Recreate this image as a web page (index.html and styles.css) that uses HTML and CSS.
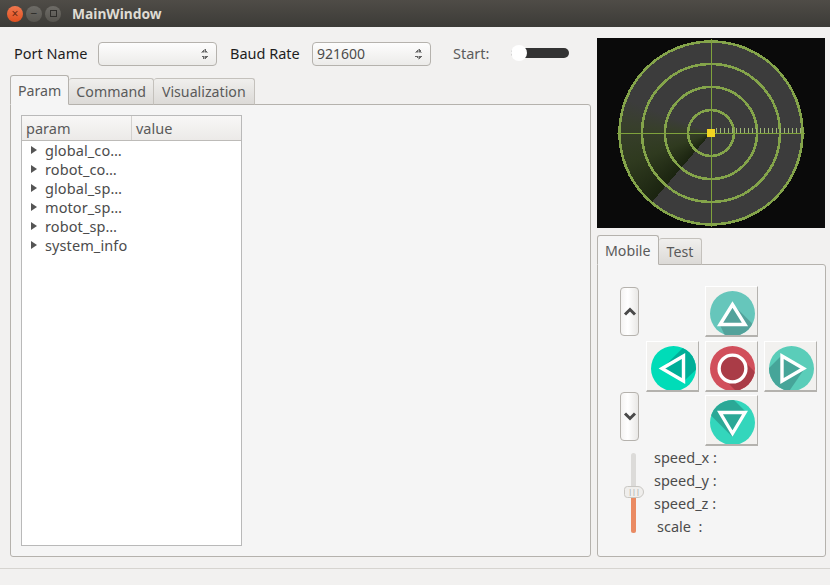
FILE: index.html
```html
<!DOCTYPE html>
<html lang="en">
<head>
    <meta charset="UTF-8">
    <title>MainWindow</title>
    <link rel="stylesheet" href="styles.css">
</head>
<body>
<div id="titlebar">
    <span class="win-btn close">&times;</span>
    <span class="win-btn">&minus;</span>
    <span class="win-btn"><i class="max"></i></span>
    <span class="win-title">MainWindow</span>
</div>
<div id="main">
    <div id="left">
        <div id="toolbar">
            <label class="lbl-port">Port Name</label>
            <div class="combo"><span></span><i class="spin"></i></div>
            <label class="lbl-baud">Baud Rate</label>
            <div class="combo"><span>921600</span><i class="spin"></i></div>
            <label class="lbl-start">Start:</label>
            <div class="switch"><i></i></div>
        </div>
        <ul class="tabs">
            <li class="selected">Param</li>
            <li>Command</li>
            <li>Visualization</li>
        </ul>
        <div class="panel" id="param-panel">
            <div id="tree">
                <div class="tree-head">
                    <span class="col-param">param</span>
                    <span class="col-value">value</span>
                </div>
                <ul class="tree-body">
                    <li>global_co…</li>
                    <li>robot_co…</li>
                    <li>global_sp…</li>
                    <li>motor_sp…</li>
                    <li>robot_sp…</li>
                    <li>system_info</li>
                </ul>
            </div>
        </div>
    </div>
    <div id="right">
        <div id="radar">
            <div class="disc"></div>
            <svg class="scope" width="228" height="190" viewBox="0 0 228 190">
                <g fill="none" stroke="#84a44a" stroke-width="2.600" shape-rendering="crispEdges">
                    <circle cx="114" cy="95" r="23"/>
                    <circle cx="114" cy="95" r="46"/>
                    <circle cx="114" cy="95" r="69"/>
                    <circle cx="114" cy="95" r="91.500"/>
                </g>
                <path d="M114.500 1V189M20 95.500H208" stroke="#7fa23c" stroke-width="1"/>
                <path d="M119.500 90v5m4 -5v5m4 -5v5m4 -5v5m4 -5v5m4 -5v5m4 -5v5m4 -5v5m4 -5v5m4 -5v5m4 -5v5m4 -5v5m4 -5v5m4 -5v5m4 -5v5m4 -5v5m4 -5v5m4 -5v5m4 -5v5m4 -5v5m4 -5v5m4 -5v5" stroke="#9fb676" stroke-width="1"/>
                <rect x="110" y="91" width="8" height="8" fill="#f2d422"/>
            </svg>
        </div>
        <ul class="tabs">
            <li class="selected">Mobile</li>
            <li>Test</li>
        </ul>
        <div class="panel" id="mobile-panel">
            <div id="drive">
                <div class="updown">
                    <button class="step"><svg width="14" height="9" viewBox="0 0 14 9"><path d="M2 7.500L7 2.500l5 5" fill="none" stroke="#4a4a4a" stroke-width="3"/></svg></button>
                    <button class="step"><svg width="14" height="9" viewBox="0 0 14 9"><path d="M2 1.500L7 6.500l5-5" fill="none" stroke="#4a4a4a" stroke-width="3"/></svg></button>
                </div>
                <div class="pad">
                    <button class="pad-btn up">
                        <svg width="45" height="44" viewBox="0 0 45 44">
                            <clipPath id="c1"><circle cx="22.500" cy="22.500" r="22.500"/></clipPath>
                            <circle cx="22.500" cy="22.500" r="22.500" fill="#66c6bb"/>
                            <path clip-path="url(#c1)" d="M22.500 13L56 46V60H22L10 34Z" fill="#53a29b"/>
                            <path d="M22.500 13.500L10 33.500H35Z" fill="#53a29b" stroke="#fff" stroke-width="3.400"/>
                        </svg>
                    </button>
                    <button class="pad-btn left">
                        <svg width="45" height="44" viewBox="0 0 45 44">
                            <clipPath id="c2"><circle cx="22.500" cy="22.500" r="22.500"/></clipPath>
                            <circle cx="22.500" cy="22.500" r="22.500" fill="#00dcb8"/>
                            <path clip-path="url(#c2)" d="M11 22.500L45 -11L62 8L33 35Z" fill="#00ae98"/>
                            <path d="M11 22.500L32.500 10V35Z" fill="#00ae98" stroke="#fff" stroke-width="3.400"/>
                        </svg>
                    </button>
                    <button class="pad-btn stop">
                        <svg width="45" height="44" viewBox="0 0 45 44">
                            <clipPath id="c3"><circle cx="22.500" cy="22.500" r="22.500"/></clipPath>
                            <circle cx="22.500" cy="22.500" r="22.500" fill="#d14f5b"/>
                            <path clip-path="url(#c3)" d="M32 13L60 41L41 60L13 32Z" fill="#aa3c47"/>
                            <circle cx="22.500" cy="22.500" r="13.400" fill="#aa3c47" stroke="#fff" stroke-width="3.400"/>
                        </svg>
                    </button>
                    <button class="pad-btn right">
                        <svg width="45" height="44" viewBox="0 0 45 44">
                            <clipPath id="c4"><circle cx="22.500" cy="22.500" r="22.500"/></clipPath>
                            <circle cx="22.500" cy="22.500" r="22.500" fill="#5acdb9"/>
                            <path clip-path="url(#c4)" d="M13 9L-14 36L10 60L36 22Z" fill="#46a599"/>
                            <path d="M34.500 22.500L13 10V35Z" fill="#46a599" stroke="#fff" stroke-width="3.400"/>
                        </svg>
                    </button>
                    <button class="pad-btn down">
                        <svg width="45" height="44" viewBox="0 0 45 44">
                            <clipPath id="c5"><circle cx="22.500" cy="22.500" r="22.500"/></clipPath>
                            <circle cx="22.500" cy="22.500" r="22.500" fill="#33d6bc"/>
                            <path clip-path="url(#c5)" d="M36 12L14 -10H-8V6.500L22.500 37Z" fill="#2ba896"/>
                            <path d="M22.500 33.500L10 12.500H35Z" fill="#2ba896" stroke="#fff" stroke-width="3.400"/>
                        </svg>
                    </button>
                </div>
            </div>
            <div id="speed">
                <div class="slider">
                    <div class="groove"></div>
                    <div class="fill"></div>
                    <div class="handle">|||</div>
                </div>
                <ul class="readout">
                    <li>speed_x :</li>
                    <li>speed_y :</li>
                    <li>speed_z :</li>
                    <li class="scale">scale &nbsp;:</li>
                </ul>
            </div>
        </div>
    </div>
</div>
<div id="statusbar"></div>
</body>
</html>
```

FILE: styles.css
```css
*{
    margin: 0;
    padding: 0;
    box-sizing: border-box;
}
ul,ol{
    list-style: none;
}
html,body{
    width: 830px;
    height: 585px;
    overflow: hidden;
}
body{
    display: flex;
    flex-direction: column;
    background-color: #f2f1f0;
    color: #4c4c4c;
    font-family: "Noto Sans", "Open Sans", sans-serif;
    font-size: 14.500px;
}
#titlebar{
    height: 27px;
    flex: none;
    display: flex;
    align-items: center;
    padding-left: 7px;
    gap: 3px;
    background: linear-gradient(#4f4c47, #3c3b37);
}
.win-btn{
    width: 16px;
    height: 16px;
    border-radius: 50%;
    background: linear-gradient(#6e6c67, #57554f);
    color: #2e2d2a;
    font-size: 12px;
    line-height: 15px;
    text-align: center;
    display: flex;
    align-items: center;
    justify-content: center;
}
.win-btn.close{
    background: linear-gradient(#f0784f, #e0501f);
    color: #6b2a12;
}
.win-btn .max{
    width: 7px;
    height: 7px;
    border: 1px solid #2e2d2a;
}
.win-title{
    margin-left: 8px;
    color: #dfdbd2;
    font-weight: bold;
    font-size: 13.800px;
}
#main{
    flex: 1;
    display: flex;
    padding: 11px 4px 11px 10px;
    gap: 6px;
}
#left{
    width: 581px;
    display: flex;
    flex-direction: column;
}
#right{
    width: 229px;
    display: flex;
    flex-direction: column;
}
#toolbar{
    height: 37px;
    padding-top: 4px;
    display: flex;
    align-items: flex-start;
    color: #1e1e1e;
}
#toolbar label{
    line-height: 23px;
}
.lbl-port{
    margin-left: 4px;
    width: 84px;
}
.lbl-baud{
    margin-left: 13px;
    width: 82px;
}
#toolbar .lbl-start{
    margin-left: 22px;
    width: 58px;
    color: #5c5c5c;
}
.combo{
    width: 119px;
    height: 24px;
    border: 1px solid #b5b2ad;
    border-radius: 4px;
    background: linear-gradient(#fdfdfd, #ecebe9);
    display: flex;
    align-items: center;
    justify-content: space-between;
    padding: 0 8px 1px 4px;
    color: #4c4c4c;
    font-size: 14px;
}
.spin{
    width: 7px;
    height: 12px;
    background:
        linear-gradient(135deg, transparent 50%, #666 50%) 0 1px/3.500px 3.500px no-repeat,
        linear-gradient(225deg, transparent 50%, #666 50%) 3.500px 1px/3.500px 3.500px no-repeat,
        linear-gradient(45deg, transparent 50%, #666 50%) 0 8px/3.500px 3.500px no-repeat,
        linear-gradient(315deg, transparent 50%, #666 50%) 3.500px 8px/3.500px 3.500px no-repeat;
}
.switch{
    width: 58px;
    height: 10px;
    margin-top: 6px;
    background-color: #333;
    border-radius: 5px;
    position: relative;
}
.switch i{
    position: absolute;
    left: 0;
    top: -3px;
    width: 16px;
    height: 16px;
    border-radius: 50%;
    background-color: #fff;
}
.tabs{
    display: flex;
    height: 30px;
    align-items: flex-end;
    position: relative;
    z-index: 1;
    margin-bottom: -1px;
    font-size: 14.200px;
}
.tabs li{
    height: 27px;
    line-height: 25px;
    padding: 0 7px;
    border: 1px solid #c4c1bc;
    border-left-width: 0;
    border-bottom: 1px solid #b5b2ad;
    border-radius: 3px 3px 0 0;
    background: linear-gradient(#f0efed, #dcdad7);
    color: #5a5a5a;
}
.tabs li:last-child{
    padding: 0 8px;
}
.tabs .selected{
    height: 30px;
    line-height: 29px;
    border-left-width: 1px;
    border-color: #b5b2ad;
    border-bottom-color: #f5f5f5;
    background: #f5f5f5;
}
.panel{
    flex: 1;
    background-color: #f5f5f5;
    border: 1px solid #b5b2ad;
    border-radius: 0 3px 3px 3px;
}
#param-panel{
    padding: 10px 0 10px 10px;
}
#tree{
    width: 221px;
    height: 100%;
    background-color: #fff;
    border: 1px solid #b9b9b9;
}
.tree-head{
    height: 25px;
    display: flex;
    line-height: 25px;
    background: linear-gradient(#f8f7f6, #eceae8);
    border-bottom: 1px solid #bdbbb8;
    color: #5a5a5a;
}
.col-param{
    width: 110px;
    padding-left: 4px;
    border-right: 1px solid #d3d1ce;
}
.col-value{
    padding-left: 4px;
}
.tree-body li{
    height: 19px;
    line-height: 19px;
    padding-left: 23px;
    position: relative;
    letter-spacing: 0.100px;
}
.tree-body li::before{
    content: "";
    position: absolute;
    left: 9px;
    top: 5px;
    border-left: 6px solid #555;
    border-top: 4px solid transparent;
    border-bottom: 4px solid transparent;
}
#radar{
    width: 228px;
    height: 190px;
    background-color: #0a0a0a;
    display: grid;
    place-items: center;
}
#radar > *{
    grid-area: 1 / 1;
}
.disc{
    width: 184px;
    height: 184px;
    border-radius: 50%;
    background: conic-gradient(#3c3c3c 0 220.500deg, #1b2410 220.500deg, #2f3a1f 250deg, #383f2c 275deg, #3c3c3c 292deg, #3c3c3c 360deg);
}
.scope{
    display: block;
}
#right .tabs{
    margin-top: 3px;
    height: 34px;
}
#mobile-panel{
    padding: 22px 0 0 22px;
}
#drive{
    display: flex;
    gap: 7px;
}
.updown{
    width: 19px;
    height: 155px;
    display: flex;
    flex-direction: column;
    justify-content: space-between;
    padding-bottom: 1px;
}
.step{
    width: 19px;
    height: 49px;
    border: 1px solid #b5b2ad;
    border-radius: 4px;
    background: linear-gradient(90deg, #f4f3f2, #fff 40%, #e9e8e6);
    display: flex;
    align-items: center;
    justify-content: center;
}
.pad{
    display: grid;
    grid-template-columns: 53px 53px 53px;
    grid-template-rows: 55px 54px 51px;
    column-gap: 6px;
    margin-top: -1px;
    grid-template-areas: ". up ." "left stop right" ". down .";
}
.pad-btn{
    height: 51px;
    background-color: #f2f1ef;
    border: 1px solid #fff;
    border-right: 1px solid #b4b2ae;
    border-bottom: 2px solid #b4b2ae;
    padding: 3px 0 0 4px;
    display: block;
    overflow: hidden;
    line-height: 0;
    text-align: left;
}
.pad-btn.up{ grid-area: up; }
.pad-btn.left{ grid-area: left; }
.pad-btn.stop{ grid-area: stop; }
.pad-btn.right{ grid-area: right; }
.pad-btn.down{ grid-area: down; }
#speed{
    display: flex;
    margin-top: 6px;
    margin-left: 4px;
}
.slider{
    width: 22px;
    height: 80px;
    position: relative;
    margin-top: 1px;
}
.groove{
    position: absolute;
    left: 7px;
    top: 0;
    width: 5px;
    height: 80px;
    border-radius: 3px;
    background-color: #dcdbd9;
}
.fill{
    position: absolute;
    left: 7px;
    top: 38px;
    width: 5px;
    height: 42px;
    border-radius: 0 0 3px 3px;
    background-color: #ea8a62;
}
.handle{
    position: absolute;
    left: 0;
    top: 33px;
    width: 20px;
    height: 12px;
    border: 1px solid #c9c7c3;
    border-radius: 4px 7px 7px 4px;
    background-color: #efeeec;
    color: #9a9a9a;
    font-size: 7px;
    line-height: 9px;
    text-align: center;
}
.readout{
    margin-left: 8px;
    margin-top: -6px;
    color: #4c4c4c;
}
.readout li{
    height: 23px;
    line-height: 23px;
}
.readout .scale{
    padding-left: 3px;
}
#statusbar{
    height: 17px;
    flex: none;
    border-top: 1px solid #d6d4d0;
}
```
